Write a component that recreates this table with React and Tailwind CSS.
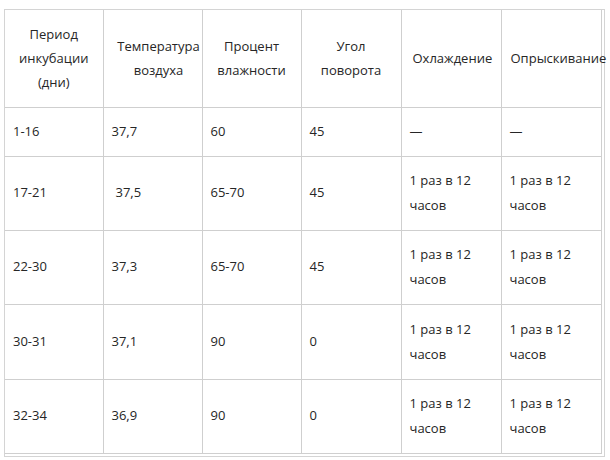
import React from 'react';

const HEAD = [
  { lines: ['Период', 'инкубации', '(дни)'], cls: 'text-center px-[8px]' },
  { lines: ['Температура', 'воздуха'], cls: 'text-center pl-[12px] pr-0' },
  { lines: ['Процент', 'влажности'], cls: 'text-center px-[8px]' },
  { lines: ['Угол', 'поворота'], cls: 'text-center px-[8px]' },
  { lines: ['Охлаждение'], cls: 'text-left pl-[11px] pr-0' },
  { lines: ['Опрыскивание'], cls: 'text-left pl-[9px] pr-0' },
];

const ONCE = ['1 раз в 12', 'часов'];

const ROWS = [
  { h: 'h-[49px]', cells: ['1-16', '37,7', '60', '45', '—', '—'] },
  { h: 'h-[74px]', cells: ['17-21', ' 37,5', '65-70', '45', ONCE, ONCE] },
  { h: 'h-[74px]', cells: ['22-30', '37,3', '65-70', '45', ONCE, ONCE] },
  { h: 'h-[75px]', cells: ['30-31', '37,1', '90', '0', ONCE, ONCE] },
  { h: 'h-[74px]', cells: ['32-34', '36,9', '90', '0', ONCE, ONCE] },
];

const WIDTHS = ['w-[98px]', 'w-[99px]', 'w-[99px]', 'w-[100px]', 'w-[100px]', 'w-[100px]'];

function Cell({ value }) {
  if (Array.isArray(value)) {
    return (
      <div className="leading-[25px]">
        {value.map((line, i) => (
          <div key={i}>{line}</div>
        ))}
      </div>
    );
  }
  if (value.startsWith(' ')) {
    return <span className="pl-[4px]">{value.trim()}</span>;
  }
  return <span>{value}</span>;
}

export default function App() {
  return (
    <div className="w-[610px] h-[460px] bg-white pt-[9px] pl-[4px] overflow-hidden" style={{ fontFamily: '"Open Sans", "Liberation Sans", sans-serif' }}>
      <div className="inline-block border border-[#d4d4d4] pr-[2px] pb-[2px]">
        <table className="table-fixed w-[595px] border-collapse text-[13px] text-[#262626]">
          <colgroup>
            {WIDTHS.map((w, i) => (
              <col key={i} className={w} />
            ))}
          </colgroup>
          <thead>
            <tr className="h-[97px]">
              {HEAD.map((h, i) => (
                <th
                  key={i}
                  className={`border border-[#cfcfcf] border-t-0 first:border-l-0 font-normal align-middle leading-[24px] whitespace-nowrap overflow-visible ${h.cls}`}
                >
                  {h.lines.map((l, j) => (
                    <div key={j}>{l}</div>
                  ))}
                </th>
              ))}
            </tr>
          </thead>
          <tbody>
            {ROWS.map((row, r) => (
              <tr key={r} className={row.h}>
                {row.cells.map((c, i) => (
                  <td
                    key={i}
                    className="border border-[#cfcfcf] first:border-l-0 align-middle text-left pl-[8px] pr-[4px]"
                  >
                    <Cell value={c} />
                  </td>
                ))}
              </tr>
            ))}
          </tbody>
        </table>
      </div>
    </div>
  );
}
